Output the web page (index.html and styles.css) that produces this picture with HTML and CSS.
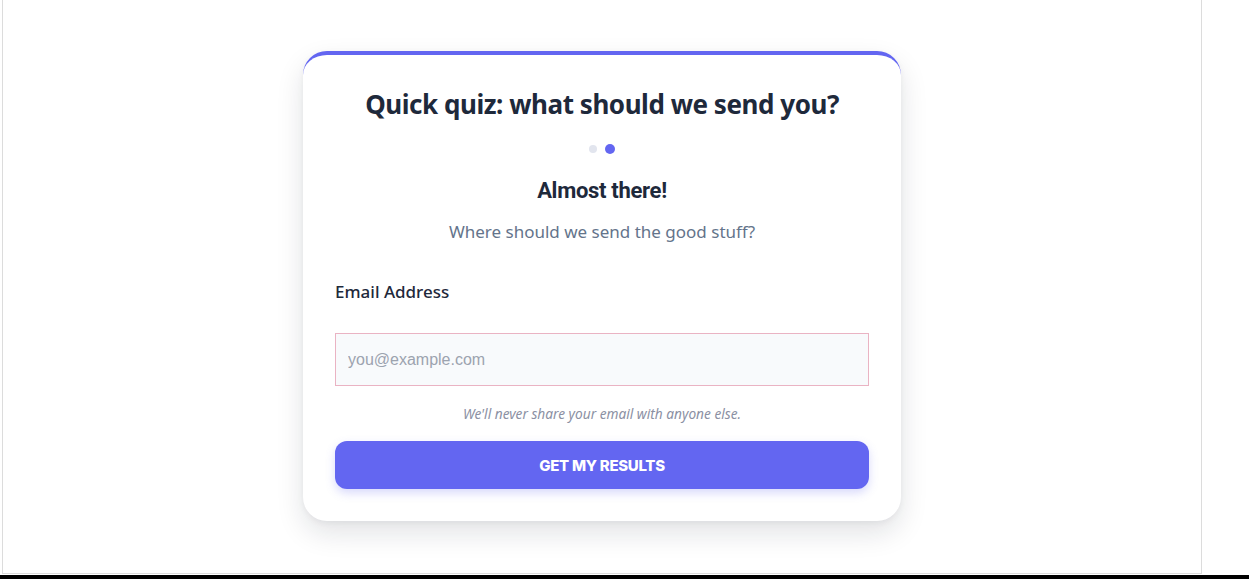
FILE: index.html
```html
<!DOCTYPE html>
<html lang="en">
<head>
<meta charset="utf-8">
<title>Quick quiz</title>
<link rel="stylesheet" href="styles.css">
</head>
<body>
<div class="page">
  <div class="frame">
    <div class="card">
      <h1 class="title">Quick quiz: what should we send you?</h1>
      <div class="dots"><span class="dot"></span><span class="dot active"></span></div>
      <h2 class="step-title">Almost there!</h2>
      <p class="step-sub">Where should we send the good stuff?</p>
      <label class="label" for="email">Email Address</label>
      <input class="input" id="email" type="email" placeholder="you@example.com">
      <p class="help">We'll never share your email with anyone else.</p>
      <button class="btn" type="button">GET MY RESULTS</button>
    </div>
  </div>
</div>
</body>
</html>
```
FILE: styles.css
```css
html { background: #000; }
body { margin: 0; }
.page {
  background: #fff;
  height: 575px;
  padding-left: 2px;
  box-sizing: border-box;
}
.frame {
  width: 1200px;
  height: 574px;
  box-sizing: border-box;
  border: 1px solid #dcdcdc;
  border-top: none;
  padding-top: 51px;
  display: flex;
  justify-content: center;
  align-items: flex-start;
}
.card {
  width: 598px;
  box-sizing: border-box;
  background: #fff;
  border-top: 4px solid #6366f1;
  border-radius: 24px;
  padding: 32px 32px 32px;
  box-shadow: 0 12px 28px rgba(15, 23, 42, 0.12), 0 2px 6px rgba(15, 23, 42, 0.05);
  display: flex;
  flex-direction: column;
  align-items: stretch;
}
.title {
  margin: 0;
  font-family: "Noto Sans", sans-serif;
  font-weight: 700;
  font-size: 26px;
  line-height: 34px;
  color: #1e293b;
  text-align: center;
  letter-spacing: -0.45px;
}
.dots {
  display: flex;
  justify-content: center;
  gap: 8px;
  margin-top: 24px;
  height: 8px;
}
.dot {
  width: 8px;
  height: 8px;
  border-radius: 50%;
  background: #e2e5ee;
}
.dot.active { width: 10px; height: 10px; margin-top: -1px; background: #6366f1; }
.step-title {
  margin: 24px 0 0;
  font-family: Roboto, sans-serif;
  font-weight: 700;
  font-size: 22px;
  line-height: 28px;
  color: #1e293b;
  text-align: center;
  letter-spacing: -0.3px;
}
.step-sub {
  margin: 14px 0 0;
  font-family: "Noto Sans", sans-serif;
  font-size: 17px;
  line-height: 26px;
  color: #64748b;
  text-align: center;
}
.label {
  margin-top: 35px;
  font-family: "Noto Sans", sans-serif;
  font-weight: 500;
  font-size: 17px;
  line-height: 24px;
  color: #1e293b;
}
.input {
  margin-top: 29px;
  height: 53px;
  box-sizing: border-box;
  border: 1px solid #eab3c3;
  background: #f8fafc;
  padding: 0 12px;
  font-family: "Liberation Sans", Arial, sans-serif;
  font-size: 16px;
  color: #1e293b;
  outline: none;
}
.input::placeholder { color: #9ca3af; }
.help {
  margin: 19px 0 0;
  font-family: "Noto Sans", sans-serif;
  font-style: italic;
  font-size: 13.7px;
  line-height: 18px;
  color: #8b90a3;
  text-align: center;
}
.btn {
  margin-top: 18px;
  height: 48px;
  border: none;
  border-radius: 12px;
  background: #6366f1;
  color: #fff;
  font-family: Inter, sans-serif;
  font-weight: 800;
  font-size: 15px;
  letter-spacing: -0.3px;
  box-shadow: 0 4px 10px rgba(99, 102, 241, 0.25);
  cursor: pointer;
}
```
